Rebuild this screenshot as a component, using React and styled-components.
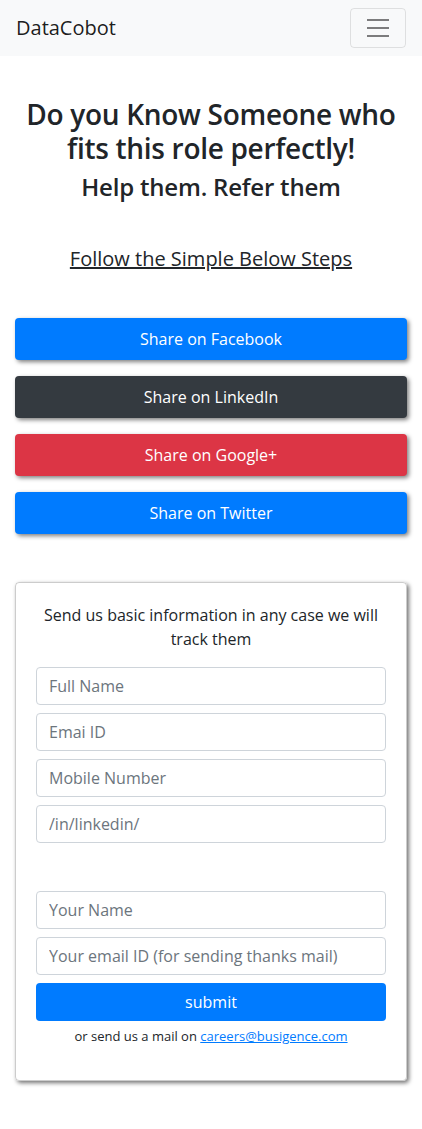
import React from "react";
import styled, { createGlobalStyle } from "styled-components";

const GlobalStyle = createGlobalStyle`
    * { box-sizing: border-box; }
    body {
        margin: 0;
        font-family: "Open Sans", "Noto Sans", sans-serif;
        color: #212529;
        background: #fff;
        font-size: 16px;
        line-height: 1.5;
    }
`;

const Navbar = styled.nav`
    height: 56px;
    background-color: #f8f9fa;
    display: flex;
    align-items: center;
    justify-content: space-between;
    padding: 0 16px;
`;

const Brand = styled.a`
    font-size: 20px;
    color: rgba(0, 0, 0, 0.9);
    text-decoration: none;
`;

const Toggler = styled.button`
    width: 56px;
    height: 40px;
    border: 1px solid rgba(0, 0, 0, 0.1);
    border-radius: 4px;
    background: transparent;
    display: flex;
    align-items: center;
    justify-content: center;
    padding: 0;
`;

const Main = styled.main`
    padding: 42px 15px 48px;
    text-align: center;
`;

const Title = styled.h3`
    font-size: 28px;
    font-weight: 600;
    line-height: 1.2;
    margin: 0 0 8px;
    letter-spacing: -0.3px;
`;

const Subtitle = styled.h4`
    font-size: 24px;
    font-weight: 600;
    line-height: 1.2;
    margin: 0;
    letter-spacing: -0.2px;
`;

const StepsTitle = styled.h5`
    font-size: 20px;
    font-weight: 500;
    line-height: 1.2;
    text-decoration: underline;
    margin: 45px 0 47px;
`;

const ShareList = styled.div`
    display: flex;
    flex-direction: column;
    gap: 16px;
`;

const ShareButton = styled.button`
    width: 100%;
    height: 42px;
    border: none;
    border-radius: 4px;
    background-color: ${(p) => p.$bg};
    color: #fff;
    font-family: inherit;
    font-size: 16px;
    box-shadow: 2px 2px 4px rgba(0, 0, 0, 0.5);
`;

const Card = styled.section`
    margin-top: 48px;
    border: 1px solid rgba(0, 0, 0, 0.2);
    border-radius: 4px;
    box-shadow: 2px 2px 4px rgba(0, 0, 0, 0.55);
    padding: 20px 20px 34px;
`;

const CardText = styled.p`
    margin: 0 0 16px;
`;

const Form = styled.form`
    display: flex;
    flex-direction: column;
    gap: 8px;
`;

const Input = styled.input`
    width: 100%;
    height: 38px;
    border: 1px solid #ced4da;
    border-radius: 4px;
    padding: 6px 12px;
    font-family: inherit;
    font-size: 16px;
    color: #495057;
    &::placeholder { color: #6c757d; }
`;

const Spacer = styled.div`
    height: 32px;
`;

const Submit = styled.button`
    height: 38px;
    border: none;
    border-radius: 4px;
    background-color: #007bff;
    color: #fff;
    font-family: inherit;
    font-size: 16px;
`;

const Note = styled.p`
    margin: 6px 0 0;
    font-size: 13px;
    a { color: #007bff; }
`;

const shares = [
    { label: "Share on Facebook", bg: "#007bff" },
    { label: "Share on LinkedIn", bg: "#343a40" },
    { label: "Share on Google+", bg: "#dc3545" },
    { label: "Share on Twitter", bg: "#007bff" },
];

const App = () => {
    return (
        <>
            <GlobalStyle />
            <Navbar>
                <Brand href="#">DataCobot</Brand>
                <Toggler aria-label="menu">
                    <svg width="30" height="30" viewBox="0 0 30 30">
                        <path d="M4 7h22M4 15h22M4 23h22" stroke="rgba(0,0,0,0.5)" strokeWidth="2" />
                    </svg>
                </Toggler>
            </Navbar>
            <Main>
                <Title>Do you Know Someone who fits this role perfectly!</Title>
                <Subtitle>Help them. Refer them</Subtitle>
                <StepsTitle>Follow the Simple Below Steps</StepsTitle>
                <ShareList>
                    {shares.map((s) => (
                        <ShareButton key={s.label} $bg={s.bg}>{s.label}</ShareButton>
                    ))}
                </ShareList>
                <Card>
                    <CardText>Send us basic information in any case we will track them</CardText>
                    <Form onSubmit={(e) => e.preventDefault()}>
                        <Input placeholder="Full Name" />
                        <Input placeholder="Emai ID" />
                        <Input placeholder="Mobile Number" />
                        <Input placeholder="/in/linkedin/" />
                        <Spacer />
                        <Input placeholder="Your Name" />
                        <Input placeholder="Your email ID (for sending thanks mail)" />
                        <Submit type="submit">submit</Submit>
                    </Form>
                    <Note>
                        or send us a mail on <a href="#">careers@busigence.com</a>
                    </Note>
                </Card>
            </Main>
        </>
    );
};

export default App;
